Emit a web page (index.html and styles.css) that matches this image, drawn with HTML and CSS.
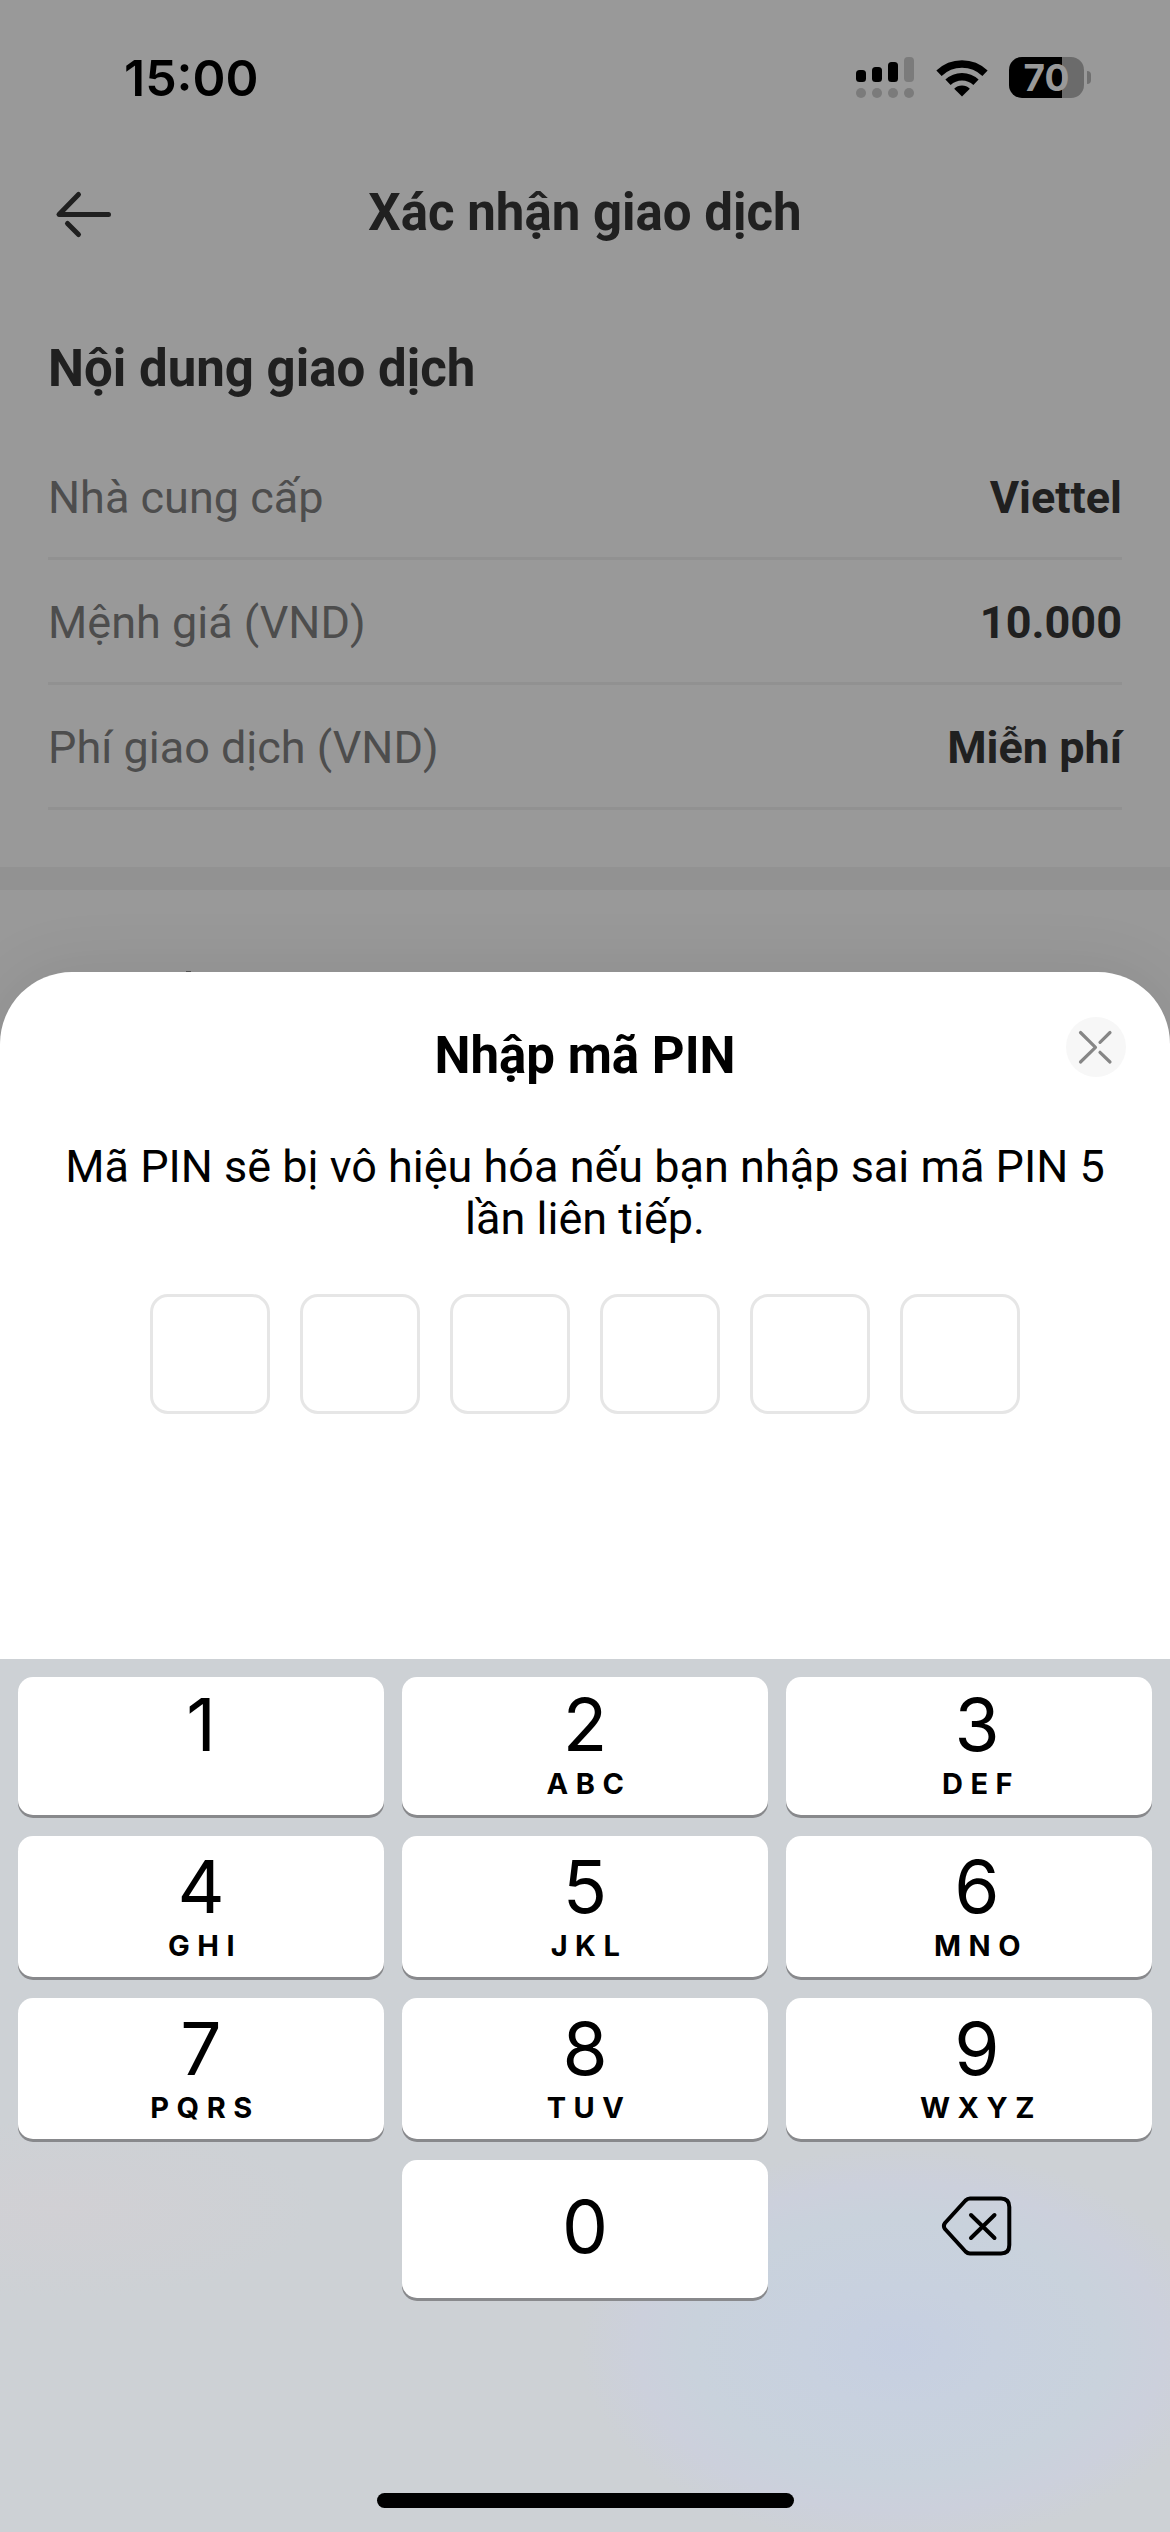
FILE: index.html
```html
<!DOCTYPE html>
<html lang="vi">
<head>
<meta charset="utf-8">
<title>Xác nhận giao dịch</title>
<link rel="stylesheet" href="styles.css">
</head>
<body>
<div class="screen">
  <main class="page">
    <div class="status">
      <span class="time">15:00</span>
      <div class="status-icons">
        <svg class="signal" width="58" height="41" viewBox="0 0 58 41">
          <g fill="#000"><rect x="0" y="13" width="10" height="12" rx="3.5"/><rect x="16" y="10" width="10" height="15" rx="3.5"/><rect x="32" y="5" width="10" height="20" rx="3.5"/></g>
          <g fill="#7b7b7b"><rect x="48" y="0" width="10" height="25" rx="4"/><circle cx="5" cy="36" r="5"/><circle cx="21" cy="36" r="5"/><circle cx="37" cy="36" r="5"/><circle cx="53" cy="36" r="5"/></g>
        </svg>
        <svg class="wifi" width="52" height="38" viewBox="0 0 52 38">
          <g fill="none" stroke="#000" stroke-width="7.6"><path d="M3 14.2a33.2 33.2 0 0 1 46 0"/><path d="M12 23.3a20.3 20.3 0 0 1 28 0"/></g>
          <path d="M26 37.5l-7.8-7.8a11.2 11.2 0 0 1 15.6 0z" fill="#000"/>
        </svg>
        <div class="battery"><span class="battery-level">70</span></div>
        <span class="battery-tip"></span>
      </div>
    </div>
    <header class="nav">
      <svg class="back" width="60" height="50" viewBox="0 0 60 50" fill="none" stroke="#202020" stroke-width="5" stroke-linecap="round" stroke-linejoin="round">
        <path d="M24.500 4.500L5 24.500H54.500M13.500 33.500L24.500 44.500"/>
      </svg>
      <h1 class="nav-title">Xác nhận giao dịch</h1>
    </header>
    <section class="details">
      <h2 class="details-title">Nội dung giao dịch</h2>
      <dl class="rows">
        <div class="row"><dt>Nhà cung cấp</dt><dd>Viettel</dd></div>
        <div class="row"><dt>Mệnh giá (VND)</dt><dd>10.000</dd></div>
        <div class="row"><dt>Phí giao dịch (VND)</dt><dd>Miễn phí</dd></div>
      </dl>
    </section>
    <div class="band"></div>
    <span class="peek"></span>
  </main>

  <section class="sheet">
    <header class="sheet-head">
      <h2 class="sheet-title">Nhập mã PIN</h2>
      <button class="close" aria-label="Đóng">
        <svg width="60" height="60" viewBox="0 0 60 60" fill="none" stroke="#868686" stroke-width="3.2" stroke-linecap="round" stroke-linejoin="round">
          <path d="M14.500 15.500L29.500 30.300L14.500 45M44 15.500L34 25.300M34 35.300L44 45"/>
        </svg>
      </button>
    </header>
    <p class="desc">Mã PIN sẽ bị vô hiệu hóa nếu bạn nhập sai mã PIN 5<br>lần liên tiếp.</p>
    <div class="pin"><span></span><span></span><span></span><span></span><span></span><span></span></div>
  </section>

  <section class="keyboard">
    <div class="keys">
      <div class="key"><b>1</b></div>
      <div class="key"><b>2</b><i>ABC</i></div>
      <div class="key"><b>3</b><i>DEF</i></div>
      <div class="key"><b>4</b><i>GHI</i></div>
      <div class="key"><b>5</b><i>JKL</i></div>
      <div class="key"><b>6</b><i>MNO</i></div>
      <div class="key"><b>7</b><i>PQRS</i></div>
      <div class="key"><b>8</b><i>TUV</i></div>
      <div class="key"><b>9</b><i>WXYZ</i></div>
      <div class="key key-zero"><b>0</b></div>
      <div class="delete">
        <svg width="72" height="60" viewBox="0 0 72 60" fill="none" stroke="#000" stroke-width="4" stroke-linecap="round" stroke-linejoin="round">
          <path d="M29 2.500H60Q68.300 2.500 68.300 11V49Q68.300 57.500 60 57.500H29Q26.500 57.500 24.500 55.500L4 33Q1.800 30 4 27L24.500 4.500Q26.500 2.500 29 2.500Z"/>
          <path d="M30 19L53.500 42M53.500 19L30 42"/>
        </svg>
      </div>
    </div>
    <div class="home"></div>
  </section>
</div>
</body>
</html>
```
FILE: styles.css
```css
* { box-sizing: border-box; margin: 0; padding: 0; }
body { background: #999; }

.screen {
  width: 1170px;
  height: 2532px;
  overflow: hidden;
  display: flex;
  flex-direction: column;
  background: #999;
  font-family: Roboto, "Liberation Sans", sans-serif;
  color: #202020;
}

.page { position: relative; height: 972px; flex: none; }

/* status bar */
.status {
  height: 150px;
  padding: 5px 79px 0 124px;
  display: flex;
  align-items: center;
  justify-content: space-between;
  font-family: Inter, "Liberation Sans", sans-serif;
  color: #000;
}
.time { font-size: 50px; line-height: 60px; font-weight: 600; }
.status-icons { display: flex; align-items: center; }
.wifi { margin-left: 22px; }
.battery {
  width: 75px;
  height: 41px;
  margin-left: 21px;
  border-radius: 13px;
  background: linear-gradient(90deg, #000 53px, #6b6b6b 53px);
  display: flex;
  align-items: center;
  justify-content: center;
}
.battery-level { font-size: 37px; line-height: 41px; font-weight: 700; color: #999; }
.battery-tip { width: 4px; height: 13px; margin-left: 3px; border-radius: 0 4px 4px 0; background: #707070; }

/* navigation bar */
.nav {
  height: 125px;
  padding: 0 54px;
  display: grid;
  grid-template-columns: 1fr auto 1fr;
  align-items: center;
}
.back { margin-top: 4px; }
.nav-title, .details-title, .sheet-title { font-size: 51px; line-height: 60px; font-weight: 700; }

/* transaction details */
.details { padding: 64px 48px 0; }
.rows { margin-top: 36px; }
.row {
  height: 125px;
  padding-top: 2px;
  display: flex;
  align-items: center;
  justify-content: space-between;
  border-bottom: 3px solid #919191;
  font-size: 45px;
}
.row dt { color: #4d4d4d; }
.row dd { font-weight: 700; }
.band { height: 23px; margin-top: 57px; background: #929292; }
.peek { position: absolute; left: 186px; bottom: 0; width: 5px; height: 1px; background: #555; }

/* PIN sheet */
.sheet {
  position: relative;
  height: 687px;
  flex: none;
  padding-top: 54px;
  border-radius: 72px 72px 0 0;
  background: #fff;
  box-shadow: 0 0 70px rgba(0, 0, 0, .09);
  color: #000;
}
.sheet-head {
  height: 60px;
  padding: 0 44px;
  display: grid;
  grid-template-columns: 1fr auto 1fr;
}
.sheet-title { grid-column: 2; }
.close {
  width: 60px;
  height: 60px;
  margin-top: -9px;
  justify-self: end;
  border: 0;
  border-radius: 50%;
  background: #f7f7f7;
}
.close svg { display: block; }
.desc { margin-top: 55px; font-size: 45px; line-height: 52px; text-align: center; white-space: nowrap; }
.pin { margin-top: 49px; display: flex; justify-content: center; gap: 30px; }
.pin span { width: 120px; height: 120px; border: 3px solid #e6e6e6; border-radius: 18px; }

/* numeric keyboard */
.keyboard {
  position: relative;
  height: 873px;
  flex: none;
  padding: 18px 18px 24px;
  display: flex;
  flex-direction: column;
  justify-content: space-between;
  font-family: Inter, "Liberation Sans", sans-serif;
  color: #000;
  background:
    radial-gradient(ellipse 320px 200px at 900px 688px, #c6cfe1 0, #c8d1df 30%, #c9d2dc 65%, #ccd0dc 82%, rgba(205, 209, 218, 0) 100%),
    radial-gradient(ellipse 260px 90px at 60px 550px, #d1d0d4 0, rgba(209, 208, 212, 0) 100%),
    #cdd1d5;
}
.keys {
  display: grid;
  grid-template-columns: repeat(3, 366px);
  grid-template-rows: 138px 141px 141px 138px;
  gap: 21px 18px;
}
.key {
  padding-top: 14px;
  display: flex;
  flex-direction: column;
  align-items: center;
  border-radius: 15px;
  background: #fff;
  box-shadow: 0 3px 0 #88898c;
}
.key:nth-child(-n+3) { padding-top: 11px; }
.key:nth-child(3n):not(.key-zero) { padding-left: 16px; }
.key b { font-size: 73px; line-height: 73px; font-weight: 400; }
.key i { margin: 8px -8px 0 0; font-size: 29px; line-height: 29px; font-style: normal; font-weight: 700; letter-spacing: 7.5px; }
.key-zero { grid-column: 2; padding-top: 30px; }
.delete { display: flex; align-items: center; justify-content: center; padding: 0 0 7px 16px; }
.home { width: 417px; height: 15px; margin: 0 auto; border-radius: 8px; background: #000; }
```
